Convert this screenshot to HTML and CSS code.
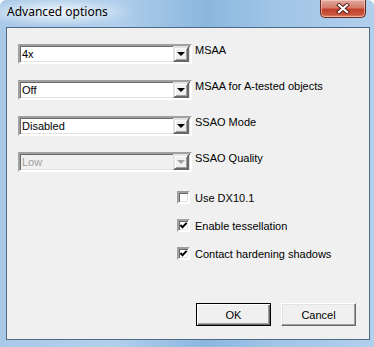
FILE: index.html
```html
<!DOCTYPE html>
<html lang="en">
<head>
  <meta charset="UTF-8">
  <title>Advanced options</title>
  <link rel="stylesheet" href="styles.css">
</head>
<body>

  <div class="window">
    <div class="titlebar">
      <span class="title">Advanced options</span>
      <button class="close" title="Close">
        <svg width="14" height="11" viewBox="0 0 14 11">
          <path d="M3 2 L11 9 M11 2 L3 9" stroke="#5a1a14" stroke-width="4" stroke-linecap="square"/>
          <path d="M3 2 L11 9 M11 2 L3 9" stroke="#fff" stroke-width="2.2" stroke-linecap="square"/>
        </svg>
      </button>
    </div>

    <div class="client">
      <!-- combo rows -->
      <div class="field">
        <div class="combo"><span class="combo-value">4x</span><span class="combo-arrow"></span></div>
        <label>MSAA</label>
      </div>
      <div class="field">
        <div class="combo"><span class="combo-value">Off</span><span class="combo-arrow"></span></div>
        <label>MSAA for A-tested objects</label>
      </div>
      <div class="field">
        <div class="combo"><span class="combo-value">Disabled</span><span class="combo-arrow"></span></div>
        <label>SSAO Mode</label>
      </div>
      <div class="field">
        <div class="combo disabled"><span class="combo-value">Low</span><span class="combo-arrow"></span></div>
        <label>SSAO Quality</label>
      </div>

      <!-- checkboxes -->
      <div class="checks">
        <label class="check"><span class="box"></span>Use DX10.1</label>
        <label class="check">
          <span class="box"><svg width="9" height="9" viewBox="0 0 9 9"><path d="M1.5 4 L3.5 6.3 L7.6 1.8" stroke="#000" stroke-width="2" fill="none"/></svg></span>
          Enable tessellation
        </label>
        <label class="check">
          <span class="box"><svg width="9" height="9" viewBox="0 0 9 9"><path d="M1.5 4 L3.5 6.3 L7.6 1.8" stroke="#000" stroke-width="2" fill="none"/></svg></span>
          Contact hardening shadows
        </label>
      </div>

      <div class="actions">
        <button class="btn btn-default">OK</button>
        <button class="btn">Cancel</button>
      </div>
    </div>
  </div>

</body>
</html>
```

FILE: styles.css
```css
body {
  margin: 0;
  background: #fff;
  font-family: 'Liberation Sans', Arial, sans-serif;
  font-size: 11px;
  color: #000;
}

.window {
  width: 374px;
  height: 347px;
  display: flex;
  flex-direction: column;
  background: linear-gradient(90deg, #a9c9e8 0%, #b2d0ec 30%, #8bb7df 55%, #a2c6e7 75%, #b0cfec 100%);
  overflow: hidden;
  border-radius: 6px 6px 0 0;
}

.titlebar {
  height: 27px;
  display: flex;
  align-items: flex-start;
  padding-left: 7px;
  background: radial-gradient(ellipse 80px 14px at 55px 12px, rgba(255,255,255,0.85), rgba(255,255,255,0) 100%);
}

.title {
  font-family: 'Noto Sans', sans-serif;
  font-size: 12px;
  line-height: 16px;
  padding-top: 4px;
  color: #000;
}

.close {
  margin-left: auto;
  margin-right: 8px;
  width: 46px;
  height: 18px;
  padding: 0;
  border: 1px solid #6b2a22;
  border-top: none;
  border-radius: 0 0 5px 5px;
  background: linear-gradient(180deg, #e2a99e 0%, #d47b6a 45%, #c0412c 55%, #c9553c 85%, #e08a6d 100%);
  display: flex;
  align-items: center;
  justify-content: center;
  box-shadow: inset 0 0 0 1px rgba(255,220,210,0.5);
}

.client {
  flex: 1;
  margin: 0 4px 7px 6px;
  border: 1px solid #4d6985;
  background: #f0f0f0;
  display: flex;
  flex-direction: column;
  padding: 16px 13px 13px 11px;
}

.field {
  display: flex;
  align-items: flex-start;
  gap: 3px;
  margin-bottom: 16px;
}

.field label {
  line-height: 13px;
}

.combo {
  width: 170px;
  height: 16px;
  display: flex;
  align-items: center;
  background: #fff;
  border: 2px solid;
  border-color: #a0a0a0 #fff #fff #a0a0a0;
  box-shadow: inset 1px 1px 0 #696969, inset -1px -1px 0 #e3e3e3;
}

.combo-value {
  flex: 1;
  padding-left: 2px;
}

.combo-arrow {
  width: 12px;
  height: 12px;
  margin-right: 1px;
  background: #f0f0f0;
  border: 2px solid;
  border-color: #e3e3e3 #696969 #696969 #e3e3e3;
  box-shadow: inset 1px 1px 0 #fff, inset -1px -1px 0 #a0a0a0;
  position: relative;
}

.combo-arrow::after {
  content: "";
  position: absolute;
  left: 2px;
  top: 4px;
  border-left: 4px solid transparent;
  border-right: 4px solid transparent;
  border-top: 4px solid #000;
}

.combo.disabled {
  background: #f0f0f0;
  color: #a0a0a0;
}

.combo.disabled .combo-arrow::after {
  border-top-color: #a0a0a0;
}

.checks {
  margin-top: 3px;
  margin-left: 159px;
  display: flex;
  flex-direction: column;
  gap: 15px;
}

.check {
  display: flex;
  align-items: center;
  gap: 5px;
  height: 13px;
}

.box {
  width: 9px;
  height: 9px;
  background: #fff;
  border: 2px solid;
  border-color: #a0a0a0 #fff #fff #a0a0a0;
  box-shadow: inset 1px 1px 0 #696969, inset -1px -1px 0 #e3e3e3;
  display: flex;
}

.actions {
  margin-top: auto;
  display: flex;
  justify-content: flex-end;
  gap: 10px;
}

.btn {
  width: 75px;
  height: 23px;
  padding: 0;
  font-family: 'Liberation Sans', Arial, sans-serif;
  font-size: 11px;
  background: #f0f0f0;
  border: 1px solid;
  border-color: #fff #696969 #696969 #fff;
  box-shadow: inset -1px -1px 0 #a0a0a0, inset 1px 1px 0 #e3e3e3;
}

.btn-default {
  border: 1px solid #000;
  box-shadow: inset 1px 1px 0 #fff, inset -1px -1px 0 #696969, inset -2px -2px 0 #a0a0a0;
}
```
